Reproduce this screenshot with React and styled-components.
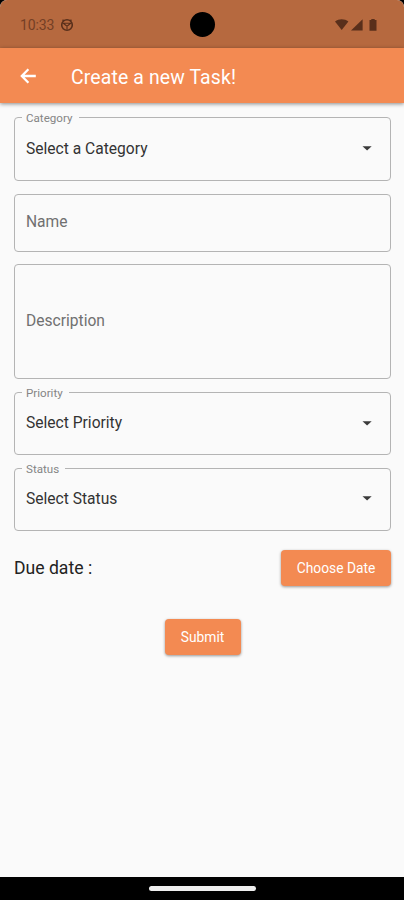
import React from 'react';
import styled, { createGlobalStyle } from 'styled-components';

const App = () => {
    return (
        <Screen>
            <GlobalStyle />
            <StatusBar>
                <Clock>10:33</Clock>
                <BadgeIcon />
                <Camera />
                <SystemIcons />
            </StatusBar>
            <AppBar>
                <BackIcon />
                <Title>Create a new Task!</Title>
            </AppBar>
            <Form>
                <SelectField label="Category" value="Select a Category" notch={57} height={64} />
                <Field $height={58}>
                    <Placeholder>Name</Placeholder>
                </Field>
                <Field $height={115}>
                    <Placeholder>Description</Placeholder>
                </Field>
                <SelectField label="Priority" value="Select Priority" notch={47} height={63.5} />
                <SelectField label="Status" value="Select Status" notch={43} height={63} />
                <DateRow>
                    <DueDate>Due date :</DueDate>
                    <Button $width={110}>Choose Date</Button>
                </DateRow>
                <SubmitRow>
                    <Button $width={76}>Submit</Button>
                </SubmitRow>
            </Form>
            <NavigationBar>
                <Handle />
            </NavigationBar>
        </Screen>
    )
}

const SelectField = ({ label, value, notch, height }) => (
    <Field $height={height}>
        <Label $width={notch}>{label}</Label>
        <Value>{value}</Value>
        <svg width="10" height="5" viewBox="0 0 10 5">
            <path d="M0.5 0.2h9.2L5.1 4.6z" fill="#3a3a3a" />
        </svg>
    </Field>
)

const BadgeIcon = () => (
    <svg width="14" height="14" viewBox="0 0 14 14" fill="none" stroke="#592f1b">
        <circle cx="7" cy="7" r="5.3" strokeWidth="1.6" />
        <path d="M3.3 5.2h7.4L7 8.2zM7 8v3.5" strokeWidth="1.1" />
        <path d="M2.5 1.8l1.6 1M11.5 1.8l-1.6 1" strokeWidth="1.4" />
    </svg>
)

const SystemIcons = () => (
    <svg width="44" height="14" viewBox="0 0 44 14" fill="#592f1b">
        <path d="M0 3.6C3.8 0.4 9.6 0.4 13.4 3.6L6.7 12z" />
        <path d="M27.6 1.2v11.4H16z" />
        <path d="M34.5 2h1.8V1h3.4v1h1.8v10.8h-7z" />
    </svg>
)

const BackIcon = () => (
    <svg width="16" height="16" viewBox="0 0 16 16" fill="none" stroke="#fff" strokeWidth="2.3">
        <path d="M15.8 8H2M8.4 1.2L1.8 8l6.6 6.8" />
    </svg>
)

const GlobalStyle = createGlobalStyle`
    * {
        box-sizing: border-box;
    }
    body {
        margin: 0;
        background: #000;
        font-family: Roboto, sans-serif;
    }
`;

const Screen = styled.div`
    display: flex;
    flex-direction: column;
    width: 404px;
    height: 900px;
    overflow: hidden;
    border-radius: 7px 7px 0 0;
    background: #fafafa;
`;

const StatusBar = styled.header`
    position: relative;
    display: flex;
    align-items: center;
    flex: 0 0 48px;
    padding: 1px 25px 0 20px;
    background: #b6693f;
    > svg:last-child {
        margin-left: auto;
    }
`;

const Clock = styled.span`
    margin-right: 6px;
    font-size: 14px;
    letter-spacing: -0.15px;
    color: #743f25;
`;

const Camera = styled.div`
    position: absolute;
    left: 190px;
    top: 12px;
    width: 25px;
    height: 25px;
    border-radius: 50%;
    background: #000;
`;

const AppBar = styled.div`
    z-index: 1;
    display: flex;
    align-items: center;
    flex: 0 0 55px;
    padding: 1px 20px 0;
    background: #f38a52;
    box-shadow: 0 1px 4px rgba(0, 0, 0, 0.45);
`;

const Title = styled.h1`
    margin: 2px 0 0 35px;
    font-size: 19.4px;
    font-weight: 400;
    letter-spacing: 0.14px;
    color: #fff;
`;

const Form = styled.form`
    display: flex;
    flex: 1;
    flex-direction: column;
    gap: 12.6px;
    padding: 14px 13px 0 14px;
`;

const Field = styled.div`
    position: relative;
    display: flex;
    align-items: center;
    justify-content: space-between;
    flex: 0 0 ${props => props.$height}px;
    padding: 0 18px 1px 11px;
    border: 1px solid #b4b4b4;
    border-radius: 4px;
`;

const Label = styled.span`
    position: absolute;
    top: -7px;
    left: 7px;
    width: ${props => props.$width}px;
    padding-left: 4px;
    font-size: 11.6px;
    line-height: 14px;
    color: #858585;
    background: #fafafa;
`;

const Value = styled.span`
    font-size: 15.6px;
    color: #333;
`;

const Placeholder = styled.span`
    font-size: 15.6px;
    color: #707070;
`;

const DateRow = styled.div`
    display: flex;
    align-items: center;
    justify-content: space-between;
    margin-top: 6.6px;
`;

const DueDate = styled.span`
    font-size: 17.6px;
    color: #222;
`;

const SubmitRow = styled.div`
    display: flex;
    justify-content: center;
    margin-top: 20px;
`;

const Button = styled.button`
    width: ${props => props.$width}px;
    height: 36px;
    padding: 0;
    border: 0;
    border-radius: 4px;
    font-family: inherit;
    font-size: 13.8px;
    font-weight: 400;
    color: #fff;
    background: #f38a52;
    box-shadow: 0 1px 3px rgba(0, 0, 0, 0.4);
`;

const NavigationBar = styled.footer`
    display: flex;
    align-items: center;
    justify-content: center;
    flex: 0 0 23px;
    background: #000;
`;

const Handle = styled.div`
    width: 107px;
    height: 5px;
    border-radius: 3px;
    background: #eee;
`;

export default App;
